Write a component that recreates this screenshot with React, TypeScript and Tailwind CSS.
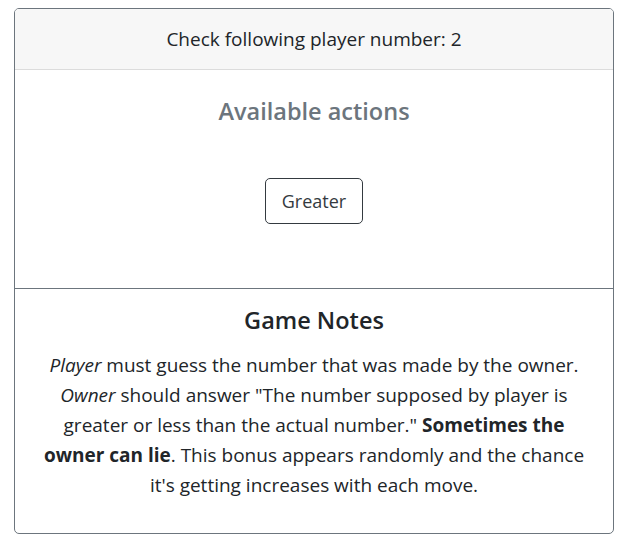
export default function App() {
  return (
    <div className="w-[630px] h-[547px] bg-white pt-2 pl-[14px] font-['Open_Sans',sans-serif] text-[#212529]">
      <div className="w-[600px] rounded-[5px] border border-[#6c757d] overflow-hidden">
        <div className="h-[61px] flex items-center justify-center bg-[#f7f7f7] border-b border-[#dcdcdc] text-[19px]">
          Check following player number: 2
        </div>
        <div className="h-[218px] flex flex-col items-center pt-[27px]">
          <h5 className="text-[23.5px] leading-[29px] font-semibold text-[#6c757d]">Available actions</h5>
          <button className="mt-[52px] h-[46px] px-4 rounded-[5px] border border-[#343a40] text-[18px] text-[#343a40]">
            Greater
          </button>
        </div>
        <div className="border-t border-[#6c757d] flex flex-col items-center pt-[17px] pb-[33px]">
          <h5 className="text-[23.5px] leading-[29px] font-semibold">Game Notes</h5>
          <p className="mt-[15px] px-[22px] text-center text-[19px] leading-[30px]">
            <i>Player</i> must guess the number that was made by the owner. <i>Owner</i> should answer "The number
            supposed by player is greater or less than the actual number." <b>Sometimes the owner can lie</b>. This
            bonus appears randomly and the chance it's getting increases with each move.
          </p>
        </div>
      </div>
    </div>
  );
}
